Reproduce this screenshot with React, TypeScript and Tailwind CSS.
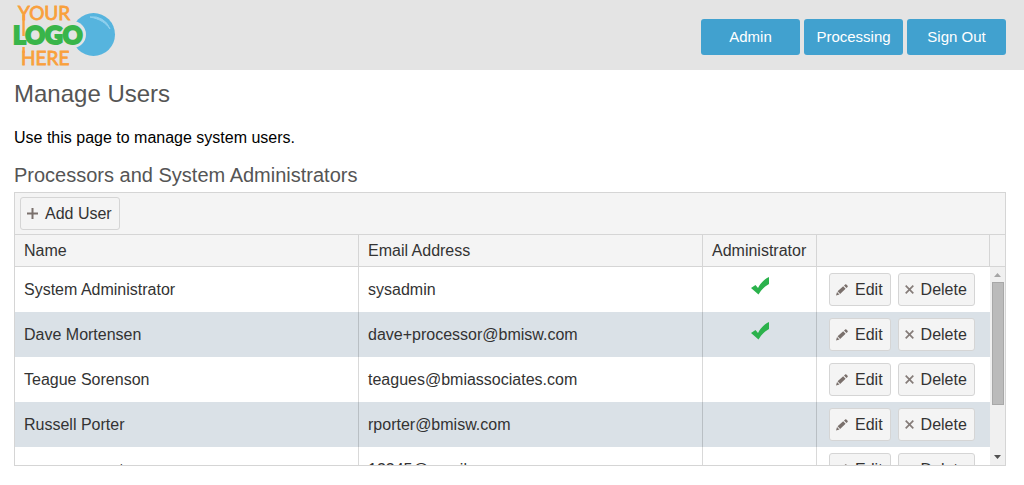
import type { ReactNode } from 'react';

interface User {
  name: string;
  email: string;
  admin: boolean;
}

const users: User[] = [
  { name: 'System Administrator', email: 'sysadmin', admin: true },
  { name: 'Dave Mortensen', email: 'dave+processor@bmisw.com', admin: true },
  { name: 'Teague Sorenson', email: 'teagues@bmiassociates.com', admin: false },
  { name: 'Russell Porter', email: 'rporter@bmisw.com', admin: false },
  { name: 'some account', email: '12345@gmail.com', admin: false },
];

const navItems = ['Admin', 'Processing', 'Sign Out'];

function Logo() {
  return (
    <svg
      className="overflow-visible"
      width="104"
      height="70"
      viewBox="0 0 104 70"
      role="img"
      aria-label="Your logo here"
    >
      <circle cx="79.500" cy="34.500" r="21.500" fill="#56b4de" />
      <path d="M76 17a18 18 0 0 1 20 12c-4-6-10-10-20-12z" fill="#8fd0ee" stroke="#8fd0ee" />
      <circle cx="58.500" cy="34.500" r="13.500" fill="#e4e4e4" />
      <g
        fill="#f9a03c"
        stroke="#f9a03c"
        strokeWidth="0.800"
        fontFamily="Lato, sans-serif"
        fontSize="19"
      >
        <text x="4" y="19.500">YOUR</text>
        <text x="7" y="64.500">HERE</text>
      </g>
      <text
        x="-1"
        y="44"
        fill="#39b54a"
        stroke="#39b54a"
        strokeWidth="2"
        fontFamily="Lato, sans-serif"
        fontWeight="900"
        fontSize="24.500"
      >
        LOGO
      </text>
      <path d="M9.500 15v21M9.500 47v6" stroke="#f9a03c" strokeWidth="2.400" />
    </svg>
  );
}

function PlusIcon() {
  return (
    <svg width="11" height="11" viewBox="0 0 11 11" aria-hidden="true">
      <path d="M5.500 0v11M0 5.500h11" stroke="#7a706c" strokeWidth="2" />
    </svg>
  );
}

function PencilIcon() {
  return (
    <svg width="12" height="12" viewBox="0 0 12 12" aria-hidden="true" fill="#7a706c">
      <path d="M0 11.500l1-3.500 2.500 2.500zM1.600 7.200l5.600-5 2.400 2.600-5.500 5.100zM8 1.500L9.200.4c.4-.3.800-.3 1.100 0l1.300 1.300c.3.4.3.800 0 1.200l-1.200 1.100z" />
    </svg>
  );
}

function CrossIcon() {
  return (
    <svg width="9" height="9" viewBox="0 0 9 9" aria-hidden="true">
      <path d="M.7.7l7.600 7.600M8.300.7L.7 8.300" stroke="#857c79" strokeWidth="1.700" />
    </svg>
  );
}

function CheckIcon() {
  return (
    <svg width="20" height="19" viewBox="0 0 20 19" role="img" aria-label="Yes">
      <path d="M1 12l4.500-3 2.500 3c2.500-5 6-8.500 11-11v7C14.500 10.500 11 14 8.500 18.500z" fill="#2bb24c" />
    </svg>
  );
}

function GridButton({ icon, children }: { icon: ReactNode; children: ReactNode }) {
  return (
    <button
      type="button"
      className="inline-flex h-[33px] items-center gap-[7px] rounded-[3px] border border-[#d5d5d5] bg-[#f4f4f4] pr-[7px] pl-[6px] text-[#333]"
    >
      {icon}
      {children}
    </button>
  );
}

function Columns() {
  return (
    <colgroup>
      <col />
      <col />
      <col className="w-[114px]" />
      <col className="w-[173px]" />
    </colgroup>
  );
}

function UserGrid() {
  return (
    <div className="border border-[#d5d5d5] text-[#333]">
      <div className="flex border-b border-[#d5d5d5] bg-[#f4f4f4] px-[5px] py-1">
        <GridButton icon={<PlusIcon />}>Add User</GridButton>
      </div>

      <div className="border-b border-[#d5d5d5] bg-[#f4f4f4] pr-[15px]">
        <table className="w-full table-fixed border-separate border-spacing-0 text-left">
          <Columns />
          <thead>
            <tr className="h-[31px]">
              <th className="border-r border-[#d5d5d5] px-[9px] font-normal">Name</th>
              <th className="border-r border-[#d5d5d5] px-[9px] font-normal">Email Address</th>
              <th className="border-r border-[#d5d5d5] px-[9px] font-normal">Administrator</th>
              <th className="border-r border-[#d5d5d5]" aria-label="Actions" />
            </tr>
          </thead>
        </table>
      </div>

      <div className="flex h-[198px] overflow-hidden">
        <div className="min-w-0 flex-1">
          <table className="w-full table-fixed border-separate border-spacing-0">
            <Columns />
            <tbody>
              {users.map((user) => (
                <tr key={user.email} className="h-[45px] even:bg-[#dae1e7]">
                  <td className="border-r border-black/15 px-[9px]">{user.name}</td>
                  <td className="border-r border-black/15 px-[9px]">{user.email}</td>
                  <td className="border-r border-black/15 pb-2">
                    {user.admin && (
                      <div className="flex justify-center">
                        <CheckIcon />
                      </div>
                    )}
                  </td>
                  <td className="px-3">
                    <div className="flex gap-[7px]">
                      <GridButton icon={<PencilIcon />}>Edit</GridButton>
                      <GridButton icon={<CrossIcon />}>Delete</GridButton>
                    </div>
                  </td>
                </tr>
              ))}
            </tbody>
          </table>
        </div>
        <div className="flex w-[15px] flex-col items-center bg-[#f0f0f0]" aria-hidden="true">
          <svg width="15" height="15" viewBox="0 0 15 15">
            <path d="M4 10h7L7.500 6z" fill="#a5a5a5" />
          </svg>
          <div className="h-[123px] w-3 border border-[#a8a8a8] bg-[#bbb]" />
          <svg className="mt-auto" width="15" height="17" viewBox="0 0 15 17">
            <path d="M4 7h7l-3.500 4z" fill="#505050" />
          </svg>
        </div>
      </div>
    </div>
  );
}

export default function App() {
  return (
    <div className="bg-white font-['Liberation_Sans',Arial,sans-serif] text-base text-black">
      <header className="flex h-[70px] items-center justify-between bg-[#e4e4e4] pr-[18px] pl-[14px]">
        <a href="#home">
          <Logo />
        </a>
        <nav className="flex gap-1 pt-1 text-[15px]">
          {navItems.map((item) => (
            <a
              key={item}
              href="#"
              className="flex h-9 w-[99px] items-center justify-center rounded-[3px] bg-[#41a1cf] text-white"
            >
              {item}
            </a>
          ))}
        </nav>
      </header>

      <main className="pr-[18px] pl-[14px]">
        <h1 className="pt-2 text-2xl text-[#555]">Manage Users</h1>
        <p className="pt-4">Use this page to manage system users.</p>
        <h2 className="pt-[11px] pb-[3px] text-xl text-[#555]">Processors and System Administrators</h2>
        <UserGrid />
      </main>
    </div>
  );
}
